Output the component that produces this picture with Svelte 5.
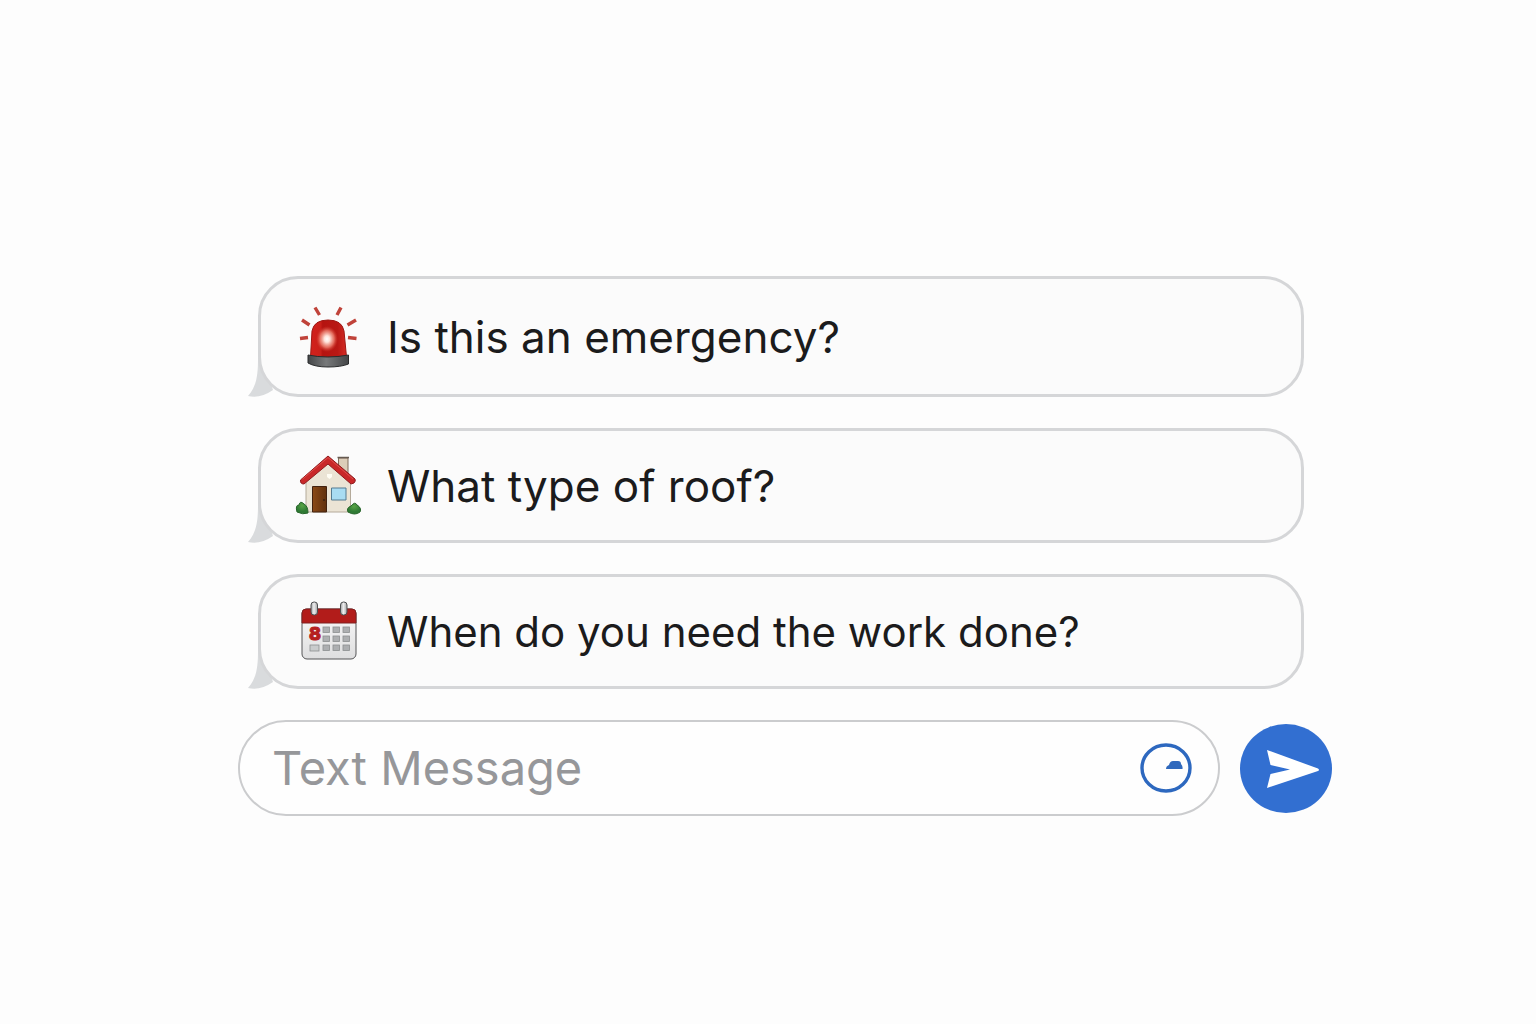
<script lang="ts">
  type Question = { icon: 'siren' | 'house' | 'calendar'; text: string };

  const questions: Question[] = [
    { icon: 'siren', text: 'Is this an emergency?' },
    { icon: 'house', text: 'What type of roof?' },
    { icon: 'calendar', text: 'When do you need the work done?' },
  ];

  let draft = $state('');

  function send(event: SubmitEvent) {
    event.preventDefault();
    draft = '';
  }
</script>

<main class="chat">
  <ul class="messages">
    {#each questions as question}
      <li class="bubble {question.icon}">
        <svg class="tail" viewBox="0 0 26 40" aria-hidden="true">
          <path d="M10 0 C10 16 9 28 0 38 Q12 41 25 32 Q20 20 22 0 Z" fill="#d9dbdd" />
        </svg>

        {#if question.icon === 'siren'}
          <svg class="icon" viewBox="0 0 90 85" aria-hidden="true">
            <defs>
              <linearGradient id="dome" x1="0" x2="1">
                <stop offset="0" stop-color="#d3211c" />
                <stop offset="0.28" stop-color="#c9201a" />
                <stop offset="0.34" stop-color="#b51310" />
                <stop offset="0.75" stop-color="#b91814" />
                <stop offset="1" stop-color="#d52c26" />
              </linearGradient>
              <radialGradient id="glow">
                <stop offset="0" stop-color="#fff" />
                <stop offset="0.25" stop-color="#ffe3da" />
                <stop offset="0.65" stop-color="#ee8170" stop-opacity="0.8" />
                <stop offset="1" stop-color="#d43a2e" stop-opacity="0" />
              </radialGradient>
              <linearGradient id="base" x1="0" x2="1">
                <stop offset="0" stop-color="#444648" />
                <stop offset="0.45" stop-color="#77797a" />
                <stop offset="1" stop-color="#444648" />
              </linearGradient>
            </defs>
            <g stroke="#c0433a" stroke-width="3.4">
              <path d="M30 13.500 L34.500 21 M56 13.500 L52 21 M17 26 L24.500 31 M71 26 L62.500 31 M15 44.500 L23 43.500 M71.500 44.500 L63 43.500" />
            </g>
            <path d="M25.500 63 L27 37 Q29 26 43 26 Q57 26 59 37 L61.500 63 Z" fill="url(#dome)" stroke="#9e1814" />
            <ellipse cx="42" cy="45" rx="11" ry="13" fill="url(#glow)" />
            <path d="M23 61 Q42 65 63.500 61 L63.500 70 Q56 73 43 73 Q30 73 23 69 Z" fill="url(#base)" stroke="#292b2c" />
          </svg>
        {:else if question.icon === 'house'}
          <svg class="icon" viewBox="0 0 90 85" aria-hidden="true">
            <defs>
              <linearGradient id="door" x1="0" x2="1">
                <stop offset="0" stop-color="#8b4a17" />
                <stop offset="1" stop-color="#60300d" />
              </linearGradient>
              <radialGradient id="bush" cx="0.5" cy="0.3">
                <stop offset="0" stop-color="#58a445" />
                <stop offset="1" stop-color="#2f7a34" />
              </radialGradient>
            </defs>
            <path d="M53.500 15 H63 V35 L53.500 25 Z" fill="#dccdb8" stroke="#806d5c" />
            <path d="M52.500 14.500 H64" stroke="#655a50" stroke-width="1.5" />
            <path d="M21 37 L43 18 L65.500 37 V69 H21 Z" fill="#ebe4d5" stroke="#b4aa9a" />
            <path d="M42 31 H47 V34 L44.500 36 L42 34 Z" fill="#fffdf4" />
            <path d="M43 13 L70 36 Q71 38 69 40 L66 41 L43 21 L19 41 Q15 41 15.500 37 Z" fill="#c92829" stroke="#8f1a1d" stroke-linejoin="round" />
            <path d="M17.500 36 L43 14.500 L68 36" fill="none" stroke="#e0504c" />
            <path d="M27.500 43.500 H41.500 V69 H27.500 Z" fill="url(#door)" stroke="#422210" />
            <circle cx="39" cy="57" r="1" fill="#392010" />
            <path d="M46.500 45 H61 V57 H46.500 Z" fill="#a9dcf2" stroke="#557b91" />
            <path d="M12 69 Q10 62 14 62 Q15 57 19 61 Q23 63 23 70 Q18 72 12 69 Z" fill="url(#bush)" stroke="#27652a" />
            <path d="M63 69 Q61 65 66 63 Q70 58 72 62 Q77 65 75 69 Q70 73 63 69 Z" fill="url(#bush)" stroke="#27652a" />
          </svg>
        {:else}
          <svg class="icon" viewBox="0 0 90 85" aria-hidden="true">
            <defs>
              <linearGradient id="paper" x2="0" y2="1">
                <stop offset="0" stop-color="#fafafa" />
                <stop offset="1" stop-color="#dededf" />
              </linearGradient>
              <linearGradient id="ring" x1="0" x2="1">
                <stop offset="0" stop-color="#9ea0a2" />
                <stop offset="0.45" stop-color="#eeeeef" />
                <stop offset="1" stop-color="#a4a5a6" />
              </linearGradient>
            </defs>
            <rect x="17" y="20" width="54" height="50" rx="5" fill="url(#paper)" stroke="#545456" />
            <path d="M17 34 V24 Q17 20 21 20 H67 Q71 20 71 24 V34 Z" fill="#b21c1a" stroke="#7f2020" />
            <rect x="26" y="13" width="6.500" height="13" rx="3" fill="url(#ring)" stroke="#4d4f51" />
            <rect x="55.500" y="13" width="6.500" height="13" rx="3" fill="url(#ring)" stroke="#4d4f51" />
            <g fill="#adafb1" stroke="#8c8e90" stroke-width="0.8">
              {#each [38, 48, 58] as x}
                {#each [38, 47, 56] as y}
                  <rect {x} {y} width="6.5" height="5.500" />
                {/each}
              {/each}
            </g>
            <rect x="25" y="56" width="9" height="6" fill="#c9cbcc" stroke="#8c8e90" stroke-width="0.8" />
            <text class="day" x="30" y="51" text-anchor="middle">8</text>
          </svg>
        {/if}

        <span>{question.text}</span>
      </li>
    {/each}
  </ul>

  <form class="composer" onsubmit={send}>
    <div class="field">
      <input type="text" placeholder="Text Message" aria-label="Text Message" bind:value={draft} />
      <button class="sticker" type="button" aria-label="Add sticker">
        <svg viewBox="0 0 52 50" aria-hidden="true">
          <ellipse cx="26" cy="25" rx="24" ry="23" fill="none" stroke="#2d68bf" stroke-width="3.4" />
          <path d="M26 26 Q26 23 29 22 Q30 18 33 18 H38 Q41 18 41 21 Q43 23 42.500 26 Z" fill="#3069bd" />
        </svg>
      </button>
    </div>
    <button class="send" type="submit" aria-label="Send message">
      <svg viewBox="0 0 92 89" aria-hidden="true">
        <path d="M27 26 L78 44.500 Q80 46 78 47 L27 64 L30.500 50 L50 45.500 L30.500 41 Z" fill="#fff" />
      </svg>
    </button>
  </form>
</main>

<style>
  :global(body) {
    margin: 0;
    background: #fdfdfd;
  }

  .chat {
    display: flex;
    flex-direction: column;
    gap: 31px;
    padding: 276px 204px 64px 238px;
    font-family: Inter, 'Liberation Sans', sans-serif;
    font-size: 44px;
    line-height: 56px;
    color: #1b1b1c;
  }

  .messages {
    display: flex;
    flex-direction: column;
    gap: 31px;
    isolation: isolate;
    margin: 0 28px 0 20px;
    padding: 0;
    list-style: none;
  }

  .bubble {
    position: relative;
    display: flex;
    align-items: center;
    gap: 12px;
    box-sizing: border-box;
    min-height: 115px;
    padding: 8px 24px;
    border: 3px solid #d5d6d8;
    border-radius: 40px;
    background: #fbfbfb;
  }

  /* the first bubble is a little taller than the rest */
  .siren {
    min-height: 121px;
  }

  /* longest question, set slightly smaller */
  .calendar {
    font-size: 42px;
  }

  /* sits behind the bubble, only the curl shows */
  .tail {
    position: absolute;
    z-index: -1;
    left: -13px;
    bottom: -4px;
    width: 26px;
    height: 40px;
  }

  .icon {
    flex: none;
    width: 90px;
    height: 85px;
  }

  .day {
    font-size: 18px;
    font-weight: 800;
    fill: #b5201e;
    stroke: #b5201e;
  }

  .composer {
    display: flex;
    align-items: center;
    gap: 20px;
  }

  .field {
    flex: 1;
    display: flex;
    align-items: center;
    box-sizing: border-box;
    min-width: 0;
    min-height: 96px;
    padding: 0 26px 0 32px;
    border: 2px solid #cbccce;
    border-radius: 48px;
    background: #fefefe;
  }

  input {
    flex: 1;
    min-width: 0;
    padding: 0;
    border: 0;
    outline: none;
    background: transparent;
    font: inherit;
    font-size: 47px;
    color: inherit;
  }

  input::placeholder {
    color: #96979a;
    opacity: 1;
  }

  button {
    flex: none;
    padding: 0;
    border: 0;
    background: transparent;
    cursor: pointer;
  }

  button svg {
    display: block;
    width: 100%;
  }

  .sticker {
    width: 52px;
  }

  .send {
    width: 92px;
    border-radius: 50%;
    background: #326fd1;
  }
</style>
